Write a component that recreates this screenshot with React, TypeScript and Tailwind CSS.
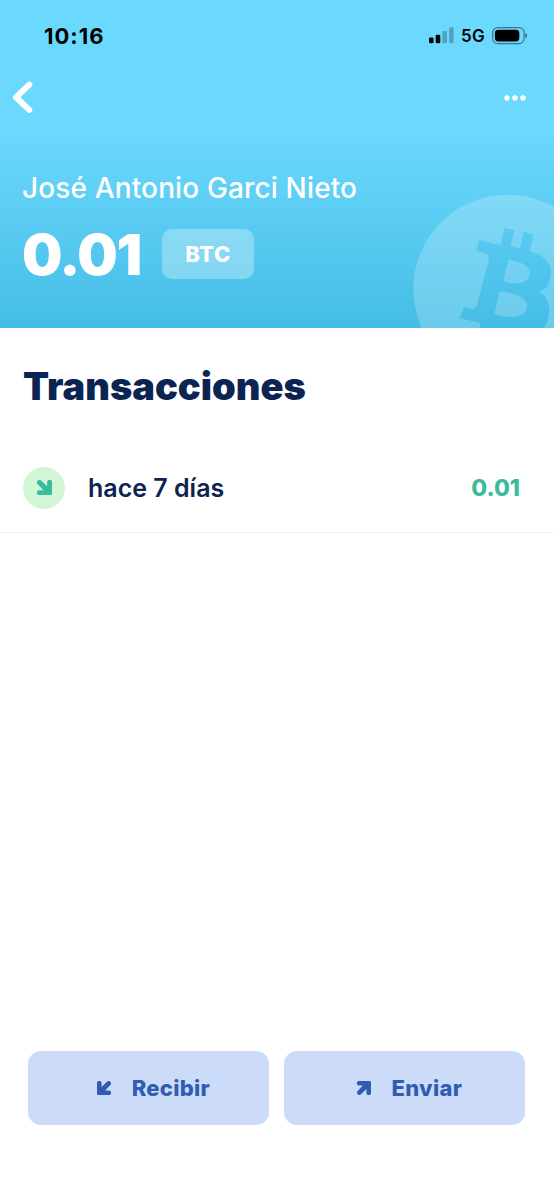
import type { ReactNode } from "react";

function StatusBar() {
  return (
    <div className="flex h-[72px] items-center justify-between pl-11 pr-[26px] text-black">
      <span className="text-[22px] font-bold leading-none tracking-[1px]">10:16</span>
      <div className="flex items-center">
        <svg width="25" height="18" viewBox="0 0 25 18" className="mr-[7px]">
          <rect x="0" y="10.5" width="4.6" height="5.8" rx="1.4" />
          <rect x="6.7" y="7.7" width="4.6" height="8.6" rx="1.4" />
          <rect x="13.4" y="4.1" width="4.6" height="12.2" rx="1.4" opacity="0.25" />
          <rect x="20.1" y="0.3" width="4.6" height="16" rx="1.4" opacity="0.25" />
        </svg>
        <span className="mr-[7px] text-[17px] font-semibold leading-none tracking-[0.3px]">5G</span>
        <svg width="36" height="18" viewBox="0 0 36 18">
          <rect x="0.7" y="0.6" width="31.4" height="16" rx="5" fill="none" stroke="#000" strokeWidth="1.2" opacity="0.45" />
          <rect x="2.9" y="2.8" width="24.4" height="11.6" rx="3.4" />
          <path d="M33.4 6c2.2.8 2.2 4.4 0 5.2z" opacity="0.5" />
        </svg>
      </div>
    </div>
  );
}

function BitcoinMark() {
  return (
    <svg
      width="160"
      height="148"
      viewBox="0 0 480 444"
      className="absolute bottom-0 right-0"
      aria-hidden="true"
    >
      <mask id="coin">
        <circle cx="341" cy="327" r="283" fill="#fff" />
        <path
          fill="#000"
          d="M331 144L361 151L350 199L378 205L389 156L418 164L407 214C455 226 475 255 470 285C467 315 455 330 432 334C460 348 472 378 463 412C458 435 450 444 440 456H253L260 430L197 414L210 380L233 387Q244 389 247 380L284 242Q286 222 272 219L247 212L255 180L320 196Z"
        />
        <path
          fill="#fff"
          d="M343 239L328 304C360 313 400 314 407 285C413 252 370 244 343 239ZM317 333L301 402C335 413 390 420 399 385C405 345 345 338 317 333Z"
        />
      </mask>
      <rect width="480" height="444" fill="#fff" fillOpacity="0.21" mask="url(#coin)" />
    </svg>
  );
}

// points down-right, rotate for the other directions
function Arrow({ className }: { className: string }) {
  return (
    <svg viewBox="0 0 16 16" fill="currentColor" className={className}>
      <path d="M0.8 4.6A2.6 2.6 0 0 1 4.6 0.8L10.8 6.6V2.4A2.4 2.4 0 0 1 16 2.4V14.6Q16 16 14.6 16H2.4A2.4 2.4 0 0 1 2.4 10.8H6.8Z" />
    </svg>
  );
}

function ActionButton({ icon, children }: { icon: ReactNode; children: ReactNode }) {
  return (
    <button className="flex h-[74px] w-[241px] items-center justify-center gap-[21px] rounded-[13px] bg-[#ccdcf8] pl-[9px] text-[22px] font-extrabold tracking-[0.3px] text-[#305db3]">
      {icon}
      <span>{children}</span>
    </button>
  );
}

export default function App() {
  return (
    <div className="flex h-[1200px] w-[554px] flex-col overflow-hidden bg-white font-['Inter',sans-serif]">
      <header className="relative h-[328px] shrink-0 overflow-hidden bg-linear-to-b from-[#6bd8fd] from-40% to-[#44bde6] text-white">
        <BitcoinMark />
        <StatusBar />
        <div className="flex h-[52px] items-center justify-between pl-3 pr-7">
          <button aria-label="Atrás">
            <svg width="22" height="34" viewBox="0 0 22 34" fill="none">
              <path d="M17.3 3.6L4 16.3L17.3 28.9" stroke="#fff" strokeWidth="6" strokeLinecap="round" strokeLinejoin="round" />
            </svg>
          </button>
          <button aria-label="Opciones">
            <svg width="22" height="6" viewBox="0 0 22 6" fill="#fff">
              <circle cx="3" cy="3" r="2.7" />
              <circle cx="11" cy="3" r="2.7" />
              <circle cx="19" cy="3" r="2.7" />
            </svg>
          </button>
        </div>
        <div className="px-[22px] pt-[46px]">
          <p className="whitespace-nowrap text-[28px] font-medium leading-9 tracking-[0.14px]">José Antonio Garci Nieto</p>
          <div className="mt-[23px] flex items-start">
            <span className="w-[140px] pt-px text-[57px] font-black leading-[50px] tracking-[-1.4px]">0.01</span>
            <span className="flex h-[50px] w-[92px] items-center justify-center rounded-[10px] bg-white/30 text-[22px] font-extrabold tracking-[0.6px]">BTC</span>
          </div>
        </div>
      </header>

      <main className="flex-1">
        <h1 className="px-[23px] pt-[35px] text-[38px] font-black leading-[46px] tracking-[0.02px] text-[#0b2452]">Transacciones</h1>
        <div className="mt-[33px] flex h-[91px] items-center border-b border-[#f2f2f2] pl-[23px] pr-[34px]">
          <span className="mt-px flex size-[42px] items-center justify-center rounded-full bg-[#d1f7d4] text-[#36bd9e]">
            <Arrow className="size-[15px]" />
          </span>
          <span className="ml-[23px] flex-1 pt-[3px] text-[25px] font-semibold text-[#0b2452]">hace 7 días</span>
          <span className="pt-[3px] text-[23px] font-extrabold text-[#3dba9c]">0.01</span>
        </div>
      </main>

      <footer className="flex gap-[15px] pb-[74.6px] pl-[28.4px]">
        <ActionButton icon={<Arrow className="size-[14px] rotate-90" />}>Recibir</ActionButton>
        <ActionButton icon={<Arrow className="size-[14px] -rotate-90" />}>Enviar</ActionButton>
      </footer>
    </div>
  );
}
